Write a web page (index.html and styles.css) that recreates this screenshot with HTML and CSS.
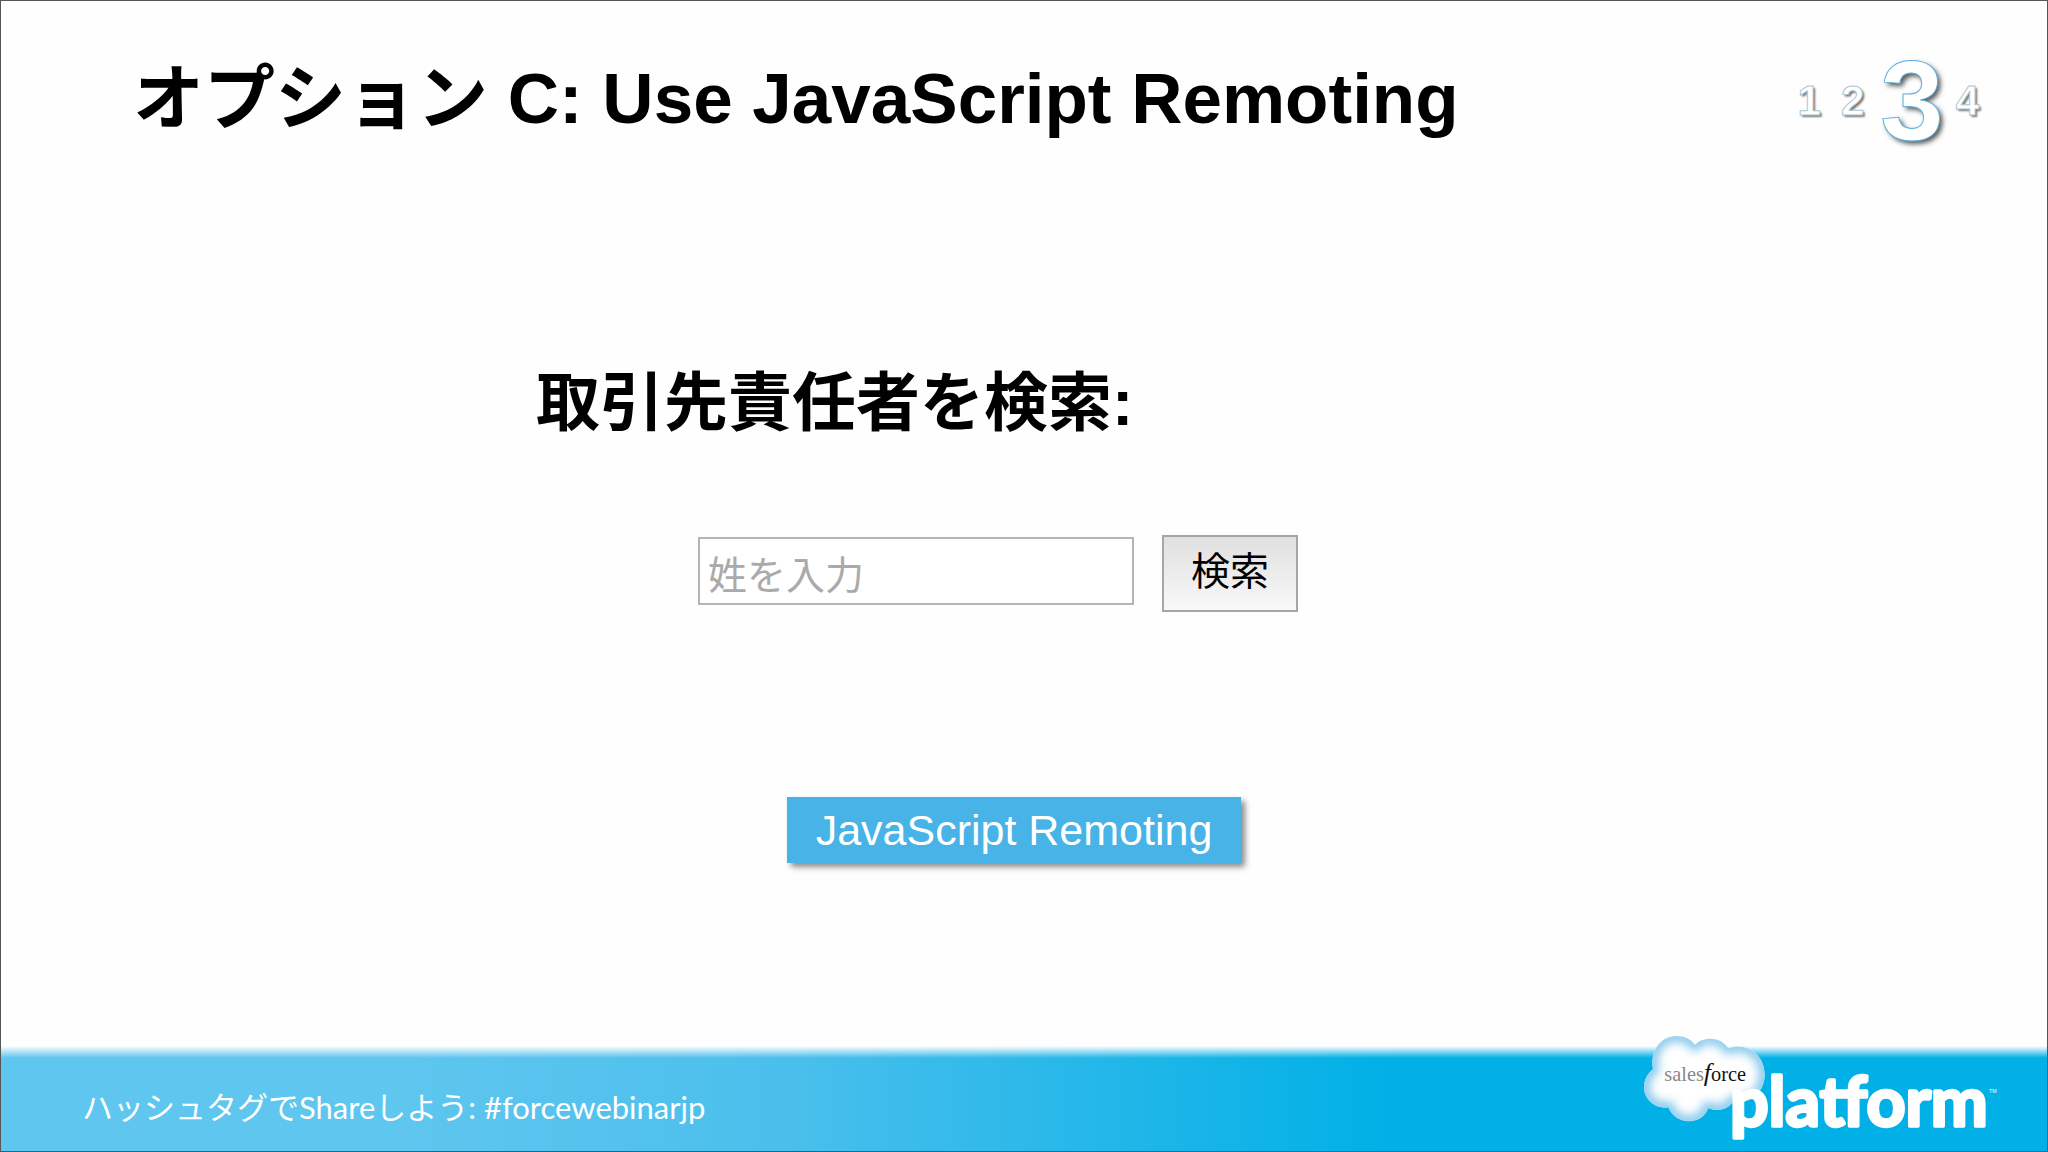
FILE: index.html
```html
<!DOCTYPE html>
<html lang="ja">
<head>
  <meta charset="UTF-8" />
  <meta name="viewport" content="width=device-width, initial-scale=1.0" />
  <title>オプション C: Use JavaScript Remoting</title>
  <link rel="stylesheet" href="styles.css">
</head>
<body>
  <div class="slide">
    <header class="header">
      <h1 class="title">オプション C: Use JavaScript Remoting</h1>
      <div class="steps">
        <span class="step">1</span>
        <span class="step">2</span>
        <span class="step current">3</span>
        <span class="step">4</span>
      </div>
    </header>

    <main class="content">
      <h2 class="heading"><label for="last-name">取引先責任者を検索:</label></h2>
      <form class="search" onsubmit="return false">
        <input class="search-input" type="text" id="last-name" placeholder="姓を入力">
        <button class="search-button" type="submit">検索</button>
      </form>
      <div class="tag">JavaScript Remoting</div>
    </main>

    <footer class="footer">
      <p class="hashtag">ハッシュタグでShareしよう: #forcewebinarjp</p>
      <svg class="logo" viewBox="130 75 1092 330" role="img" aria-label="salesforce platform">
        <defs>
          <path id="cloud" d="M160 178 C150 120 185 78 230 78 C255 78 273 88 286 104 C300 90 316 86 334 86 C356 86 374 97 386 115 C398 111 410 109 422 110 C466 114 495 150 495 194 C495 236 466 272 424 276 C412 276 404 275 400 274 C392 290 374 300 352 300 C342 300 334 298 326 294 C318 318 294 334 268 334 C240 334 216 318 206 292 C166 298 133 268 133 232 C133 210 144 190 160 178 Z" />
          <clipPath id="cloud-clip"><use href="#cloud" /></clipPath>
          <filter id="soft" x="-20%" y="-20%" width="140%" height="140%">
            <feGaussianBlur stdDeviation="14" />
          </filter>
        </defs>
        <use href="#cloud" fill="#fff" />
        <g clip-path="url(#cloud-clip)">
          <use href="#cloud" fill="none" stroke="#86c8ec" stroke-width="34" filter="url(#soft)" />
        </g>
        <text class="brand" x="194" y="212"><tspan fill="#8c8686">sales</tspan><tspan class="brand-f">f</tspan>orce</text>
        <text class="product" x="391" y="349">platform</text>
        <text class="tm" x="1168" y="249">TM</text>
      </svg>
    </footer>
  </div>
</body>
</html>
```
FILE: styles.css
```css
* {
  box-sizing: border-box;
}

body {
  margin: 0;
  background: #fefefe;
  color: #000;
  font-family: "Liberation Sans", "Noto Sans CJK JP", sans-serif;
}

.slide {
  display: flex;
  flex-direction: column;
  min-height: 100vh;
  border: 1px solid #555;
}

.header {
  display: flex;
  justify-content: space-between;
  align-items: flex-start;
  height: 120px;
  margin-top: 40px;
  padding: 0 68px 0 132px;
}

.title {
  margin: 0;
  padding-top: 18px;
  font-size: 71px;
  line-height: 80px;
}

.steps {
  display: flex;
  align-items: center;
  gap: 20px;
}

.step {
  color: #fff;
  font-size: 42px;
  font-weight: bold;
  line-height: 48px;
  -webkit-text-stroke: 1px #a9c6d2;
  text-shadow: 2px 2px 2px #777;
}

.step.current {
  margin: 0 -8px 0 -4px;
  font-size: 114px;
  line-height: 120px;
  -webkit-text-stroke: 1px #5fb0dc;
  text-shadow: 3px 3px 5px #555;
}

.content {
  flex: 1;
  width: 976px;
  margin: 0 auto;
  padding-top: 202px;
}

.heading {
  margin: 0;
  font-size: 64px;
  line-height: 80px;
}

.search {
  display: flex;
  align-items: flex-start;
  gap: 28px;
  margin: 92px 0 0 162px;
}

.search-input {
  width: 436px;
  height: 68px;
  margin-top: 2px;
  padding: 10px 8px 0;
  border: 2px solid #b4b4b4;
  background: #fff;
  font-family: inherit;
  font-size: 39px;
}

.search-input::placeholder {
  color: #aaa;
  opacity: 1;
}

.search-button {
  width: 136px;
  height: 77px;
  padding: 0 0 12px;
  border: 2px solid #a5a5aa;
  background: linear-gradient(#e0e0e0, #f8f8fa);
  color: #000;
  font-family: inherit;
  font-size: 39px;
}

.tag {
  width: 454px;
  margin: 185px 0 0 251px;
  background: #47b3e6;
  box-shadow: 4px 4px 6px rgba(0, 0, 0, 0.45);
  color: #fff;
  font-size: 43px;
  line-height: 66px;
  text-align: center;
}

/* white fade on the top edge, over the left to right blue */
.footer {
  position: relative;
  height: 106px;
  padding: 42px 84px 0 81px;
  background:
    linear-gradient(#fefefe 1px, rgba(254, 254, 254, 0) 13px),
    linear-gradient(to right, #5ec6ef 20%, #4bbfec 38%, #00b0e6 68%);
}

.hashtag {
  margin: 0;
  color: #fff;
  font-family: Lato, "Noto Sans CJK JP", sans-serif;
  font-size: 31px;
  line-height: 40px;
}

.logo {
  position: absolute;
  right: 40px;
  bottom: 6px;
  width: 364px;
  height: 110px;
}

.brand {
  fill: #111;
  font-family: "Liberation Serif", serif;
  font-size: 61px;
}

.brand-f {
  font-size: 78px;
  font-style: italic;
}

.product {
  fill: #fff;
  stroke: #fff;
  stroke-width: 10px;
  stroke-linejoin: round;
  font-family: Lato, sans-serif;
  font-size: 204px;
  font-weight: 700;
}

.tm {
  fill: #fff;
  font-size: 16px;
}
```
